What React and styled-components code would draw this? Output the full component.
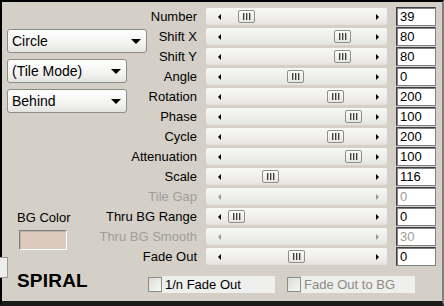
import React from "react";
import styled, { createGlobalStyle } from "styled-components";

const GlobalStyle = createGlobalStyle`
  html, body {
    margin: 0;
    padding: 0;
    background: #d4d0c8;
  }
  body {
    font-family: "Liberation Sans", Arial, sans-serif;
  }
`;

const Frame = styled.div`
  position: relative;
  width: 444px;
  height: 306px;
  box-sizing: border-box;
  border-top: 2px solid #000;
  border-left: 2px solid #000;
  border-right: 2px solid #808080;
  border-bottom: 5px solid #1c1c1c;
  background: #d4d0c8;
  display: flex;
  font-size: 13px;
  color: #000;
`;

const LeftPanel = styled.div`
  width: 144px;
  flex: none;
  display: flex;
  flex-direction: column;
  padding: 27px 0 0 5px;
  box-sizing: border-box;
`;

const Select = styled.div`
  width: ${({ $w }) => $w}px;
  height: 24px;
  box-sizing: border-box;
  border: 1px solid #8e8c86;
  border-radius: 3px;
  background: linear-gradient(#ffffff, #f3f3f1 60%, #e4e3df);
  display: flex;
  align-items: center;
  justify-content: space-between;
  padding: 0 5px 0 4px;
  font-size: 14px;
  margin-bottom: 6px;
`;

const Caret = styled.span`
  width: 0;
  height: 0;
  border-left: 5px solid transparent;
  border-right: 5px solid transparent;
  border-top: 5px solid #000;
`;

const ColorLabel = styled.div`
  margin: 91px 0 0 10px;
  line-height: 15px;
`;

const Swatch = styled.div`
  width: 48px;
  height: 20px;
  margin: 5px 0 0 12px;
  box-sizing: border-box;
  border: 1px solid;
  border-color: #808080 #ffffff #ffffff #808080;
  box-shadow: inset 1px 1px 0 #b8b4ac;
  background: #dccbbd;
`;

const Stub = styled.div`
  position: absolute;
  left: -2px;
  top: 255px;
  width: 8px;
  height: 21px;
  box-sizing: border-box;
  border: 1px solid #9a9890;
  border-left: none;
  background: #eeede9;
`;

const Title = styled.div`
  margin: 20px 0 0 10px;
  font-size: 19px;
  font-weight: bold;
  letter-spacing: 0.2px;
`;

const RightPanel = styled.div`
  flex: 1;
  display: flex;
  flex-direction: column;
  padding-top: 5px;
`;

const Row = styled.div`
  display: grid;
  grid-template-columns: 51px 181px 40px;
  column-gap: 9px;
  height: 20px;
  align-items: start;
`;

const Label = styled.div`
  display: flex;
  justify-content: flex-end;
  white-space: nowrap;
  line-height: 19px;
  color: ${({ $off }) => ($off ? "#a09d96" : "#000")};
`;

const Track = styled.div`
  position: relative;
  height: 17px;
  margin-top: 1px;
  box-sizing: border-box;
  border-radius: 2px;
  background: linear-gradient(#f7f7f5, #efeeeb 60%, #e3e2de);
  display: flex;
  align-items: center;
  justify-content: space-between;
  padding: 0 8px 0 12px;
`;

const Arrow = styled.span`
  width: 0;
  height: 0;
  border-top: 3px solid transparent;
  border-bottom: 3px solid transparent;
  ${({ $dir, $off }) =>
    $dir === "left"
      ? `border-right: 3px solid ${$off ? "#9a978f" : "#000"};`
      : `border-left: 3px solid ${$off ? "#9a978f" : "#000"};`}
`;

const Thumb = styled.div`
  position: absolute;
  top: 2px;
  width: 17px;
  height: 13px;
  box-sizing: border-box;
  border: 1px solid #8f8d87;
  border-radius: 2px;
  background: linear-gradient(#fdfdfc, #e6e5e1);
  display: flex;
  align-items: center;
  justify-content: center;
  gap: 2px;
`;

const Grip = styled.span`
  width: 1px;
  height: 7px;
  background: #3e3d3a;
  box-shadow: 1px 0 0 #b4b2ac;
`;

const Edit = styled.div`
  height: 19px;
  box-sizing: border-box;
  border: 1px solid;
  border-color: #404040 #808080 #808080 #404040;
  box-shadow: inset 1px 1px 0 #808080;
  background: #fff;
  padding: 1px 0 0 3px;
  line-height: 16px;
  font-size: 13px;
  color: ${({ $off }) => ($off ? "#a09d96" : "#000")};
`;

const CheckRow = styled.div`
  display: flex;
  align-items: center;
  margin-top: 9px;
  padding-left: 2px;
  gap: 12px;
`;

const Check = styled.div`
  display: flex;
  align-items: center;
  width: ${({ $w }) => $w}px;
  height: 17px;
  color: ${({ $off }) => ($off ? "#8e8b84" : "#000")};
`;

const Box = styled.span`
  width: 14px;
  height: 15px;
  flex: none;
  box-sizing: border-box;
  border: 1px solid #8f8d87;
  background: linear-gradient(135deg, #dcdbd6, #f8f8f6);
`;

const CheckText = styled.span`
  flex: 1;
  height: 17px;
  line-height: 17px;
  padding-left: 3px;
  background: #efefed;
`;

const rows = [
  { label: "Number", value: "39", pos: 32 },
  { label: "Shift X", value: "80", pos: 128 },
  { label: "Shift Y", value: "80", pos: 128 },
  { label: "Angle", value: "0", pos: 81 },
  { label: "Rotation", value: "200", pos: 121 },
  { label: "Phase", value: "100", pos: 139 },
  { label: "Cycle", value: "200", pos: 121 },
  { label: "Attenuation", value: "100", pos: 139 },
  { label: "Scale", value: "116", pos: 56 },
  { label: "Tile Gap", value: "0", off: true },
  { label: "Thru BG Range", value: "0", pos: 22 },
  { label: "Thru BG Smooth", value: "30", off: true },
  { label: "Fade Out", value: "0", pos: 82 },
];

const App = () => {
  return (
    <>
      <GlobalStyle />
      <Frame>
        <LeftPanel>
          <Select $w={140}>
            Circle <Caret />
          </Select>
          <Select $w={120}>
            (Tile Mode) <Caret />
          </Select>
          <Select $w={120}>
            Behind <Caret />
          </Select>
          <ColorLabel>BG Color</ColorLabel>
          <Swatch />
          <Title>SPIRAL</Title>
        </LeftPanel>
        <Stub />
        <RightPanel>
          {rows.map((r) => (
            <Row key={r.label}>
              <Label $off={r.off}>{r.label}</Label>
              <Track>
                <Arrow $dir="left" $off={r.off} />
                {!r.off && (
                  <Thumb style={{ left: r.pos }}>
                    <Grip />
                    <Grip />
                    <Grip />
                  </Thumb>
                )}
                <Arrow $dir="right" $off={r.off} />
              </Track>
              <Edit $off={r.off}>{r.value}</Edit>
            </Row>
          ))}
          <CheckRow>
            <Check $w={127}>
              <Box />
              <CheckText>1/n Fade Out</CheckText>
            </Check>
            <Check $w={128} $off>
              <Box />
              <CheckText>Fade Out to BG</CheckText>
            </Check>
          </CheckRow>
        </RightPanel>
      </Frame>
    </>
  );
};

export default App;
